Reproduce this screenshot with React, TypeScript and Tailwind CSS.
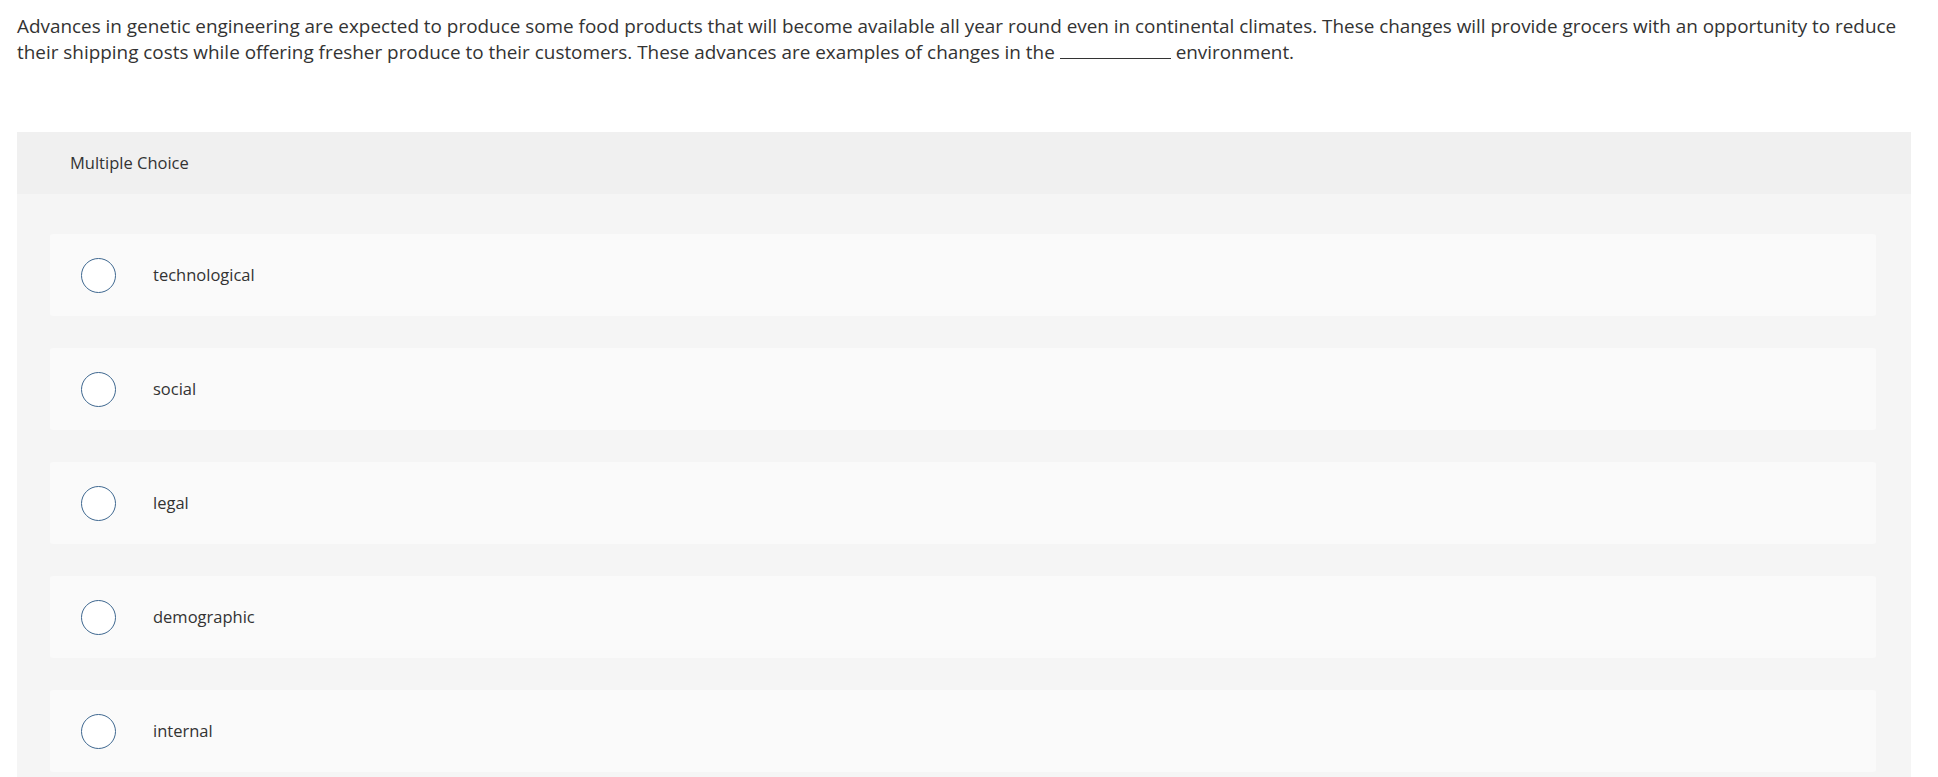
import React from "react";

const options = ["technological", "social", "legal", "demographic", "internal"];

export default function App() {
  return (
    <div className="min-h-screen bg-white text-[#333333]" style={{ fontFamily: "'Open Sans', 'Liberation Sans', sans-serif" }}>
      <p className="pl-[17px] pr-[20px] pt-[13px] text-[18.9px] leading-[26px]">
        Advances in genetic engineering are expected to produce some food products that will become available all year round even in continental climates. These changes will provide grocers with an opportunity to reduce their shipping costs while offering fresher produce to their customers. These advances are examples of changes in the{" "}
        <span className="inline-block w-[111px] border-b border-[#333333] align-baseline"></span>{" "}
        environment.
      </p>
      <div className="ml-[17px] mr-[27px] mt-[67px]">
        <div className="flex h-[62px] items-center bg-[#f0f0f0] pl-[53px] text-[16.5px]">Multiple Choice</div>
        <div className="flex flex-col gap-[32px] bg-[#f5f5f5] pb-[32px] pl-[33px] pr-[35px] pt-[40px]">
          {options.map((o) => (
            <div key={o} className="flex h-[82px] items-center rounded-[3px] bg-[#fafafa] pl-[31px]">
              <span className="h-[35px] w-[35px] shrink-0 rounded-full border-[1.5px] border-[#3f6890] bg-white"></span>
              <span className="ml-[37px] text-[16.5px]">{o}</span>
            </div>
          ))}
        </div>
      </div>
    </div>
  );
}
